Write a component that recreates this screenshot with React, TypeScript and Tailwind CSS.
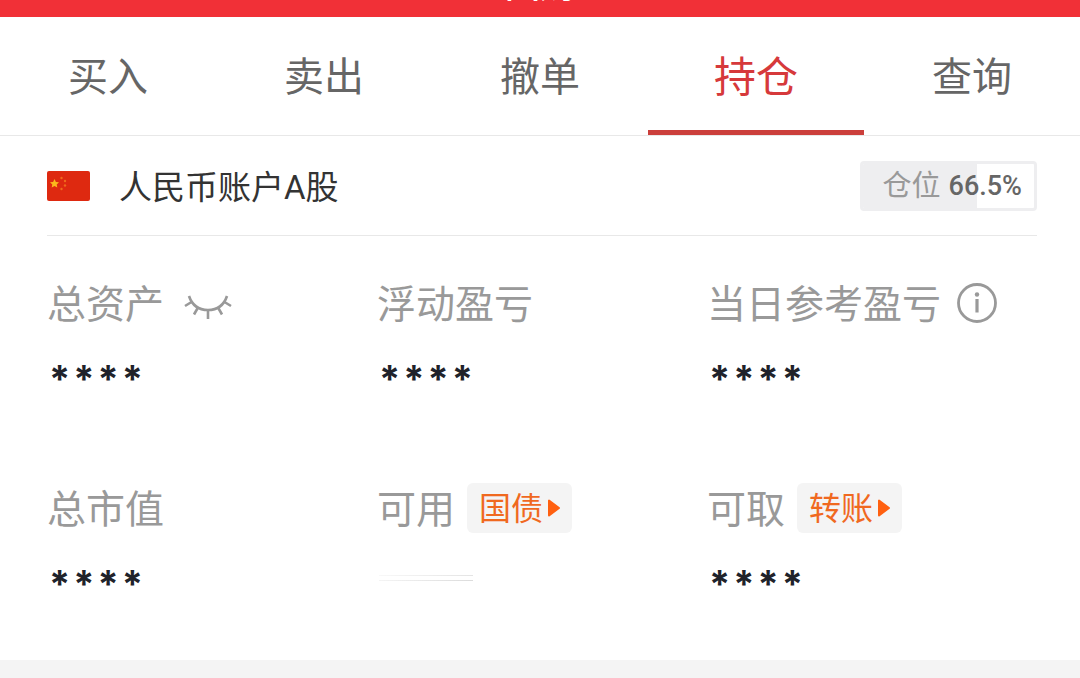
import { useState } from 'react';

type Cell = {
  label: string;
  value: string;
  icon?: 'eye' | 'info';
  action?: string;
};

const tabs = ['买入', '卖出', '撤单', '持仓', '查询'];

const cells: Cell[] = [
  { label: '总资产', value: '****', icon: 'eye' },
  { label: '浮动盈亏', value: '****' },
  { label: '当日参考盈亏', value: '****', icon: 'info' },
  { label: '总市值', value: '****' },
  { label: '可用', value: '', action: '国债' },
  { label: '可取', value: '****', action: '转账' },
];

const FlagIcon = () => (
  <svg viewBox="0 0 44 30" className="h-[30px] w-11" aria-hidden="true">
    <rect width="43" height="30" rx="2" fill="#de2910" />
    <path d="M7.500 8l1.400 2.900 3.100.4-2.300 2.200.6 3.100-2.800-1.500-2.800 1.500.6-3.100L3 11.300l3.100-.4z" fill="#fbb81c" />
    <circle cx="14.500" cy="7" r="1.200" fill="#ee6a1c" />
    <circle cx="18" cy="10" r="1.200" fill="#ee6a1c" />
    <circle cx="18" cy="14.500" r="1.200" fill="#ee6a1c" />
    <circle cx="14.500" cy="18" r="1.200" fill="#ee6a1c" />
  </svg>
);

const ClosedEyeIcon = () => (
  <svg viewBox="0 0 48 26" className="h-[26px] w-12" fill="none" stroke="#999" strokeWidth="2.600" aria-hidden="true">
    <path d="M5 2C8 11 15 16 24 16S40 11 43 2" />
    <path d="M7.500 8L1 12M14 13.500l-4 7M24 16v9M34 13.500l4 7M40.500 8L47 12" />
  </svg>
);

const InfoIcon = () => (
  <svg viewBox="0 0 40 40" className="size-10" fill="none" stroke="#999" aria-hidden="true">
    <circle cx="20" cy="20" r="18.500" strokeWidth="2.800" />
    <path d="M20 16v13.500" strokeWidth="3.200" />
    <circle cx="20" cy="11.500" r="2.200" fill="#999" stroke="none" />
  </svg>
);

const App = () => {
  const [active, setActive] = useState('持仓');
  const position = 66.5;

  return (
    <div className="min-h-screen bg-[#f4f4f4] font-['Roboto','Noto_Sans_CJK_SC',sans-serif]">
      <header className="flex h-[17px] items-end justify-center overflow-hidden bg-[#f13037]">
        <h1 className="pb-3 text-[35px] leading-9 font-medium text-white">回购</h1>
      </header>

      <main className="bg-white pb-[39px]">
        <nav className="flex h-[119px] border-b border-[#e8e8e8]">
          {tabs.map((tab) => (
            <button
              key={tab}
              onClick={() => setActive(tab)}
              className={`flex-1 border-b-5 pt-2 ${
                active === tab
                  ? 'border-[#cb3f3b] text-[42px] text-[#d6393b]'
                  : 'border-transparent text-[40px] text-[#666]'
              }`}
            >
              {tab}
            </button>
          ))}
        </nav>

        <section className="mr-[43px] ml-[47px]">
          <div className="flex h-[100px] items-center justify-between border-b border-[#e8e8e8]">
            <div className="flex items-center gap-7">
              <FlagIcon />
              <h2 className="pt-1 text-[33px] text-[#333]">人民币账户A股</h2>
            </div>
            <div className="relative flex h-[50px] items-center gap-2 overflow-hidden rounded-sm border-3 border-[#eeeef0] pt-0.5 pr-3 pl-5">
              <span
                className="absolute inset-y-0 left-0 bg-[#eeeef0]"
                style={{ width: `${position}%` }}
              />
              <span className="relative text-[29px] text-[#999]">仓位</span>
              <span className="relative text-[27px] font-medium text-[#666]">{position}%</span>
            </div>
          </div>

          <dl className="grid grid-cols-3 gap-y-[67px] pt-[42px]">
            {cells.map((cell) => (
              <div key={cell.label}>
                <dt className="flex h-[50px] items-center text-[39px] whitespace-nowrap text-[#999]">
                  <span className="pt-1">{cell.label}</span>
                  {cell.icon === 'eye' && (
                    <button aria-label="显示资产" className="ml-5 pt-2">
                      <ClosedEyeIcon />
                    </button>
                  )}
                  {cell.icon === 'info' && (
                    <button aria-label="说明" className="ml-4">
                      <InfoIcon />
                    </button>
                  )}
                  {cell.action && (
                    <button className="ml-3 flex h-[50px] items-center gap-[5px] rounded-md bg-[#f4f4f4] px-3 text-[32px] text-[#f0691f]">
                      <span className="pt-0.5">{cell.action}</span>
                      <svg viewBox="0 0 12 18" className="h-[18px] w-3" aria-hidden="true">
                        <path d="M1 1.500v15L11 9z" fill="#ff6010" stroke="#ff6010" strokeWidth="2" strokeLinejoin="round" />
                      </svg>
                    </button>
                  )}
                </dt>
                <dd className="mt-[14px] flex h-[74px] items-center gap-[3px] pl-0.5 font-['Inter'] text-[38px] font-bold text-[#20222a]">
                  {cell.value ? (
                    cell.value.split('').map((char, idx) => <span key={idx}>{char}</span>)
                  ) : (
                    <div className="mb-3 flex w-[94px] flex-col gap-1">
                      <div className="h-px bg-linear-to-r from-[#f8f8f8] to-[#e4e4e4]" />
                      <div className="h-px bg-linear-to-r from-[#f4f4f4] to-[#dcdcdc]" />
                    </div>
                  )}
                </dd>
              </div>
            ))}
          </dl>
        </section>
      </main>
    </div>
  );
};

export default App;
